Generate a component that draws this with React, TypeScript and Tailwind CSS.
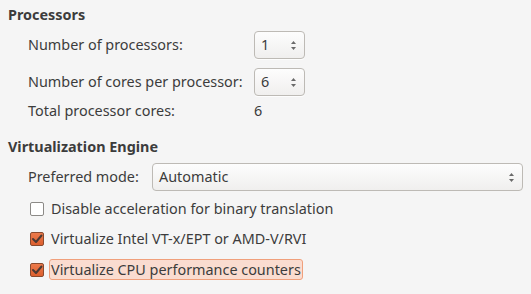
import React from "react";

const font = { fontFamily: '"Noto Sans", "Open Sans", sans-serif' };

function Arrows() {
  return (
    <svg width="7" height="11" viewBox="0 0 7 11" className="shrink-0">
      <path d="M3.5 1 L6 4 L1 4 Z" fill="#6a6a6a" />
      <path d="M3.5 10 L6 7 L1 7 Z" fill="#6a6a6a" />
    </svg>
  );
}

function Spin({ value }: { value: string }) {
  return (
    <div className="flex h-[28px] w-[51px] items-center justify-between rounded-[4px] border border-[#bdbab5] bg-gradient-to-b from-[#fdfdfd] to-[#f0efee] pl-[6px] pr-[7px] shadow-[0_1px_0_rgba(255,255,255,0.8)]">
      <span>{value}</span>
      <Arrows />
    </div>
  );
}

function Check({ checked }: { checked: boolean }) {
  if (!checked)
    return (
      <div className="h-[14px] w-[14px] shrink-0 rounded-[2px] border border-[#8c8a87] bg-white" />
    );
  return (
    <div className="flex h-[14px] w-[14px] shrink-0 items-center justify-center rounded-[2px] border border-[#8a4a2e] bg-gradient-to-b from-[#ec7a4b] to-[#dc5f2e]">
      <svg width="12" height="12" viewBox="0 0 12 12">
        <path d="M2 6 L5 9 L10.5 2.5" stroke="#4b3a34" strokeWidth="2" fill="none" strokeLinecap="round" strokeLinejoin="round" />
      </svg>
    </div>
  );
}

export default function App() {
  return (
    <div
      className="h-[294px] w-[531px] overflow-hidden bg-[#f5f5f5] text-[14.4px] leading-[20px] text-[#3c3c3c]"
      style={font}
    >
      <div className="pl-[8px] pt-[5px] font-bold">Processors</div>
      <div className="mt-[6px] grid grid-cols-[226px_60px] items-center gap-y-[9px] pl-[28px]">
        <span>Number of processors:</span>
        <Spin value="1" />
        <span>Number of cores per processor:</span>
        <Spin value="6" />
        <span className="mt-[-4px]">Total processor cores:</span>
        <span className="mt-[-4px]">6</span>
      </div>
      <div className="mt-[16px] pl-[8px] font-bold">Virtualization Engine</div>
      <div className="mt-[6px] flex items-center pl-[28px]">
        <span className="w-[124px]">Preferred mode:</span>
        <div className="flex h-[28px] w-[371px] items-center justify-between rounded-[4px] border border-[#bdbab5] bg-gradient-to-b from-[#fdfdfd] to-[#f0efee] pl-[6px] pr-[7px]">
          <span>Automatic</span>
          <Arrows />
        </div>
      </div>
      <div className="mt-[8px] flex flex-col gap-[10px] pl-[30px]">
        <div className="flex items-center gap-[5px]">
          <Check checked={false} />
          <span className="px-[2px]">Disable acceleration for binary translation</span>
        </div>
        <div className="flex items-center gap-[5px]">
          <Check checked />
          <span className="px-[2px]">Virtualize Intel VT-x/EPT or AMD-V/RVI</span>
        </div>
        <div className="flex items-center gap-[5px]">
          <Check checked />
          <span className="rounded-[3px] border border-[#f0a07c] bg-[#fadcd0] px-[1px] leading-[19px]">
            Virtualize CPU performance counters
          </span>
        </div>
      </div>
    </div>
  );
}
